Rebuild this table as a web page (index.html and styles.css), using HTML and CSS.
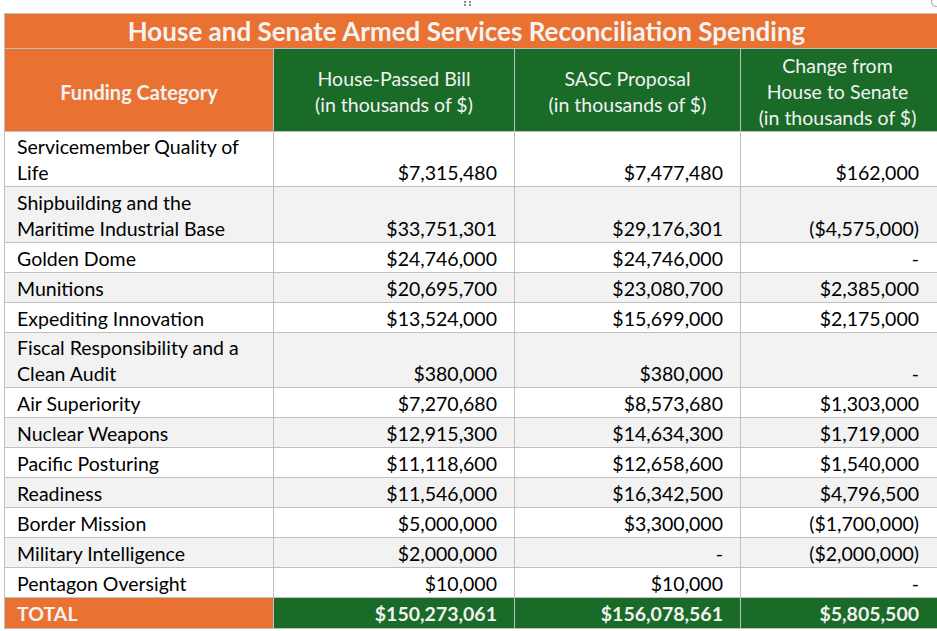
FILE: index.html
```html
<!DOCTYPE html>
<html>
<head>
<meta charset="utf-8">
<link rel="stylesheet" href="styles.css">
</head>
<body>
<div class="grip"><span></span><span></span><span></span><span></span><span></span><span></span></div>
<div class="ring"></div>
<table class="sheet">
  <colgroup>
    <col class="c1"><col class="c2"><col class="c3"><col class="c4">
  </colgroup>
  <tr class="title-row"><td colspan="4" class="title">House and Senate Armed Services Reconciliation Spending</td></tr>
  <tr class="head-row">
    <td class="head-cat">Funding Category</td>
    <td class="head-num">House-Passed Bill<br>(in thousands of $)</td>
    <td class="head-num">SASC Proposal<br>(in thousands of $)</td>
    <td class="head-num">Change from<br>House to Senate<br>(in thousands of $)</td>
  </tr>
  <tr class="r2"><td class="cat">Servicemember Quality of<br>Life</td><td class="num">$7,315,480</td><td class="num">$7,477,480</td><td class="num last">$162,000</td></tr>
  <tr class="r2b alt"><td class="cat">Shipbuilding and the<br>Maritime Industrial Base</td><td class="num">$33,751,301</td><td class="num">$29,176,301</td><td class="num last">($4,575,000)</td></tr>
  <tr class="r1"><td class="cat">Golden Dome</td><td class="num">$24,746,000</td><td class="num">$24,746,000</td><td class="num last">-</td></tr>
  <tr class="r1 alt"><td class="cat">Munitions</td><td class="num">$20,695,700</td><td class="num">$23,080,700</td><td class="num last">$2,385,000</td></tr>
  <tr class="r1"><td class="cat">Expediting Innovation</td><td class="num">$13,524,000</td><td class="num">$15,699,000</td><td class="num last">$2,175,000</td></tr>
  <tr class="r2 alt"><td class="cat">Fiscal Responsibility and a<br>Clean Audit</td><td class="num">$380,000</td><td class="num">$380,000</td><td class="num last">-</td></tr>
  <tr class="r1"><td class="cat">Air Superiority</td><td class="num">$7,270,680</td><td class="num">$8,573,680</td><td class="num last">$1,303,000</td></tr>
  <tr class="r1 alt"><td class="cat">Nuclear Weapons</td><td class="num">$12,915,300</td><td class="num">$14,634,300</td><td class="num last">$1,719,000</td></tr>
  <tr class="r1"><td class="cat">Pacific Posturing</td><td class="num">$11,118,600</td><td class="num">$12,658,600</td><td class="num last">$1,540,000</td></tr>
  <tr class="r1 alt"><td class="cat">Readiness</td><td class="num">$11,546,000</td><td class="num">$16,342,500</td><td class="num last">$4,796,500</td></tr>
  <tr class="r1"><td class="cat">Border Mission</td><td class="num">$5,000,000</td><td class="num">$3,300,000</td><td class="num last">($1,700,000)</td></tr>
  <tr class="r1 alt"><td class="cat">Military Intelligence</td><td class="num">$2,000,000</td><td class="num">-</td><td class="num last">($2,000,000)</td></tr>
  <tr class="r1"><td class="cat">Pentagon Oversight</td><td class="num">$10,000</td><td class="num">$10,000</td><td class="num last">-</td></tr>
  <tr class="total-row"><td class="tot-label">TOTAL</td><td class="tot-num">$150,273,061</td><td class="tot-num">$156,078,561</td><td class="tot-num last">$5,805,500</td></tr>
</table>
</body>
</html>
```

FILE: styles.css
```css
html, body {
  margin: 0;
  padding: 0;
  background: #ffffff;
  overflow: hidden;
}
body {
  position: relative;
  width: 937px;
  height: 631px;
  font-family: Lato, "Open Sans", sans-serif;
  padding: 13px 0 0 4px;
  box-sizing: border-box;
}
.grip {
  position: absolute;
  left: 464px;
  top: -2px;
  width: 7px;
  display: grid;
  grid-template-columns: 2px 2px;
  column-gap: 3px;
  row-gap: 1px;
}
.grip span {
  width: 2px;
  height: 2px;
  background: #8a8a8a;
}
.ring {
  position: absolute;
  left: 931px;
  top: -4px;
  width: 9px;
  height: 9px;
  border: 1px solid #9a9a9a;
  border-radius: 50%;
}
.sheet {
  border-collapse: collapse;
  table-layout: fixed;
  width: 936px;
  color: #000;
}
.c1 { width: 269px; }
.c2 { width: 241px; }
.c3 { width: 226px; }
.c4 { width: 200px; }
.sheet td {
  border: 1px solid #bfbfbf;
  padding: 0;
  font-size: 19.5px;
  line-height: 26px;
}
.title-row td {
  height: 34px;
  background: #e97132;
  color: #f5f3f1;
  font-weight: 700;
  font-size: 26px;
  text-align: center;
  vertical-align: middle;
  line-height: 30px;
  padding-right: 12px;
}
.head-row td {
  height: 77px;
  padding-top: 4px;
  color: #f2f2f2;
  text-align: center;
  vertical-align: middle;
}
.head-row td:last-child {
  padding-right: 6px;
}
.head-cat {
  background: #e97132;
  font-weight: 700;
  font-size: 20px !important;
}
.head-num {
  background: #1a6a28;
}
.r1 td { height: 29px; }
.r2 td { height: 54px; }
.r2b td { height: 55px; }
.alt td { background: #f2f2f2; }
.cat {
  padding-left: 12px !important;
  vertical-align: bottom;
}
.num {
  text-align: right;
  padding-right: 17px !important;
  vertical-align: bottom;
}
.sheet td.last {
  padding-right: 21px !important;
}
.total-row td {
  height: 29px;
  color: #f2f2f2;
  font-weight: 700;
  vertical-align: bottom;
  padding-bottom: 1px;
}
.tot-label {
  background: #e97132;
  padding-left: 12px !important;
}
.tot-num {
  background: #1a6a28;
  text-align: right;
  padding-right: 17px !important;
}
```
